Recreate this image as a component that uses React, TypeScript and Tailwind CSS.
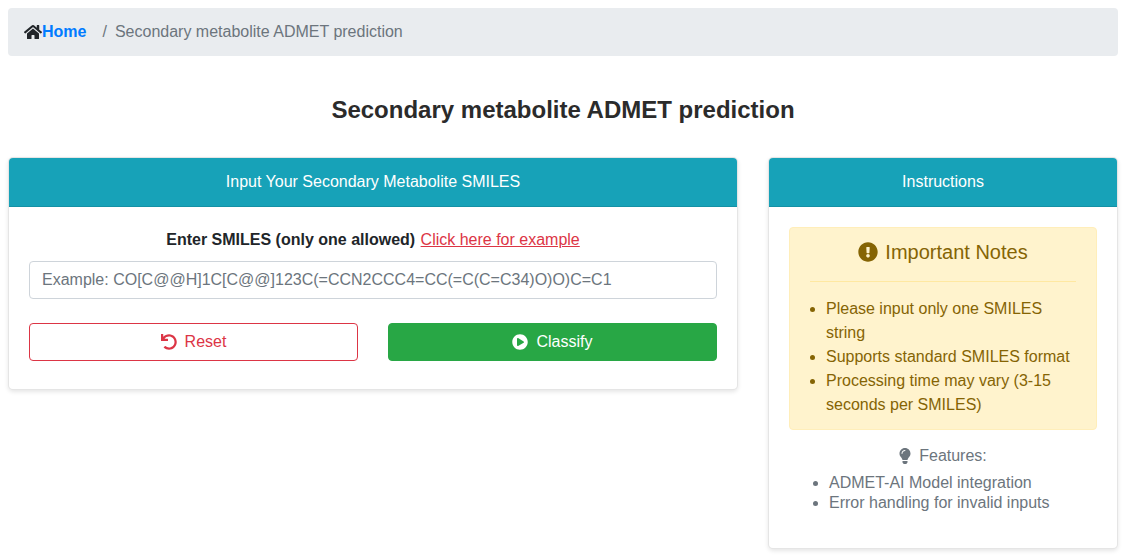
import { FaExclamationCircle, FaHome, FaLightbulb, FaPlayCircle, FaUndo } from "react-icons/fa";

const notes = [
  "Please input only one SMILES string",
  "Supports standard SMILES format",
  "Processing time may vary (3-15 seconds per SMILES)",
];

const features = ["ADMET-AI Model integration", "Error handling for invalid inputs"];

const CardHeader = ({ title }: { title: string }) => (
  <div className="h-[49px] flex items-center justify-center bg-[#17a2b8] text-white text-base rounded-t-[4px] border-b border-black/10">
    {title}
  </div>
);

export default function App() {
  return (
    <div className="bg-white min-h-[560px] pl-2 pr-[11px] pt-2 font-['Liberation_Sans',Arial,sans-serif] text-base text-[#212529]">
      {/* Breadcrumb */}
      <nav className="h-[48px] flex items-center px-4 bg-[#e9ecef] rounded-[4px]">
        <FaHome className="w-[18px] h-4 text-[#212529]" />
        <a href="#" className="font-bold text-[#007bff]">Home</a>
        <span className="pl-4 pr-2 text-[#6c757d]">/</span>
        <span className="text-[#6c757d]">Secondary metabolite ADMET prediction</span>
      </nav>

      <h1 className="mt-[39px] mb-[33px] h-[29px] leading-[29px] text-center text-2xl font-bold text-[#2b2b2b]">
        Secondary metabolite ADMET prediction
      </h1>

      <div className="flex items-start gap-[30px]">
        {/* Input card */}
        <section className="w-[730px] bg-white border border-black/10 rounded-[5px] shadow-[0_2px_4px_rgba(0,0,0,0.1)]">
          <CardHeader title="Input Your Secondary Metabolite SMILES" />
          <div className="px-5 pt-5 pb-7">
            <div className="text-center h-[25px] pt-px leading-6 mb-[9px]">
              <span className="font-bold">Enter SMILES (only one allowed)</span>{" "}
              <a href="#" className="ml-px text-[#dc3545] underline">Click here for example</a>
            </div>
            <input
              readOnly
              placeholder="Example: CO[C@@H]1C[C@@]123C(=CCN2CCC4=CC(=C(C=C34)O)O)C=C1"
              className="w-full h-[38px] px-3 bg-white border border-[#ced4da] rounded-[4px] text-base outline-none placeholder:text-[#6c757d]"
            />
            <div className="mt-6 grid grid-cols-2 gap-[30px]">
              <button className="h-[38px] flex items-center justify-center gap-2 border border-[#dc3545] rounded-[4px] text-[#dc3545]">
                <FaUndo className="w-4 h-4" />
                Reset
              </button>
              <button className="h-[38px] flex items-center justify-center gap-2 border border-[#28a745] bg-[#28a745] rounded-[4px] text-white">
                <FaPlayCircle className="w-4 h-4" />
                Classify
              </button>
            </div>
          </div>
        </section>

        {/* Instructions card */}
        <aside className="w-[350px] bg-white border border-black/10 rounded-[5px] shadow-[0_2px_4px_rgba(0,0,0,0.1)]">
          <CardHeader title="Instructions" />
          <div className="px-5 pt-5 pb-[35px]">
            <div className="bg-[#fff3cd] border border-[#ffeeba] rounded-[4px] px-5 pt-3 pb-[3px] text-[#856404]">
              <h4 className="flex items-center justify-center gap-[7px] h-6 text-xl leading-6">
                <FaExclamationCircle className="w-[20px] h-[20px]" />
                Important Notes
              </h4>
              <hr className="mt-[17px] mb-[15px] border-[#ffe8a1]" />
              <ul className="list-disc pl-[16px] leading-6">
                {notes.map((note) => (
                  <li key={note}>{note}</li>
                ))}
              </ul>
              <div className="h-[9px]" />
            </div>
            <div className="mt-[14px] text-[#6c757d]">
              <p className="flex items-center justify-center gap-[7px] h-6 -ml-px">
                <FaLightbulb className="w-[14px] h-4" />
                Features:
              </p>
              <ul className="mt-[5px] list-disc pl-10 leading-5">
                {features.map((feature) => (
                  <li key={feature}>{feature}</li>
                ))}
              </ul>
            </div>
          </div>
        </aside>
      </div>
    </div>
  );
}
